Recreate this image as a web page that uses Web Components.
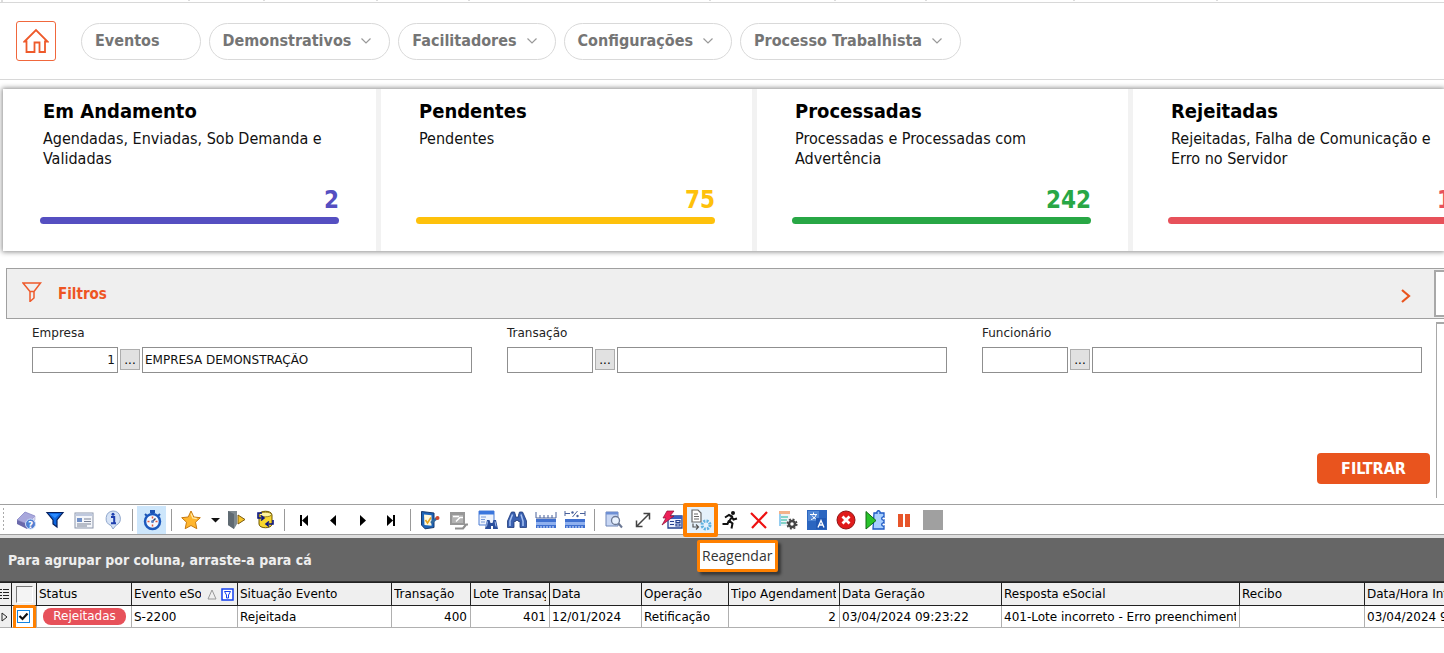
<!DOCTYPE html>
<html lang="pt-BR">
<head>
<meta charset="utf-8">
<title>Painel eSocial</title>
<style>
  html, body { margin: 0; background: #fff; }
  body { font-family: "DejaVu Sans Condensed", "DejaVu Sans", Tahoma, sans-serif; font-size: 12px; color: #000; overflow: hidden; }
</style>
</head>
<body>
<esocial-app></esocial-app>
<script>
const define = (name, html, setup) => {
  const tpl = document.createElement('template');
  tpl.innerHTML = html;
  customElements.define(name, class extends HTMLElement {
    constructor() {
      super();
      this.attachShadow({ mode: 'open' }).append(tpl.content.cloneNode(true));
    }
    connectedCallback() { if (setup) setup(this, this.shadowRoot); }
  });
};

/* ---------- toolbar glyphs, 20 x 20 ---------- */
const ICONS = {
  book: '<path d="M1 10 9 2l10 4-8 8z" fill="#a9a8dc" stroke="#7d7cc0" stroke-width=".7"/><path d="M1 10l10 4v5L1 14z" fill="#6a69ab"/><path d="M11 14l8-8v4l-8 9z" fill="#dcdcf4" stroke="#8d8cc8" stroke-width=".5"/><circle cx="14.500" cy="14" r="5" fill="#4f7fd2" stroke="#cfe0fa"/><text x="14.500" y="17.500" font-size="9" font-weight="bold" fill="#fff" text-anchor="middle" font-family="DejaVu Sans">?</text>',
  funnel: '<path d="M2 2.500h16L12 10v7l-4-3v-4z" fill="#0c66e0" stroke="#06205e" stroke-width="1.200"/><path d="M5 4h9L10 8z" fill="#2e8cff"/>',
  form: '<rect x="1" y="3" width="18" height="15" fill="#f4f6fa" stroke="#8b95aa"/><rect x="1.500" y="3.500" width="17" height="2.500" fill="#bfc9de"/><rect x="3" y="8" width="5" height="4" fill="#6f8fc8"/><path d="M10 9h7M10 11.500h7M3 14h14M3 16h10" stroke="#7b8396"/>',
  info: '<path d="M10 1a7.500 7.500 0 0 1 3 14.300L10 19l-2-3.500A7.500 7.500 0 0 1 10 1z" fill="#d6e3f6" stroke="#8ea6cc"/><path d="M8 7h3.200v6M8 13.200h5" stroke="#1e3fae" stroke-width="2" fill="none"/><circle cx="10" cy="4.200" r="1.500" fill="#1e3fae"/>',
  watch: '<path d="M8 0h5v3H8z" fill="#1c53b4"/><path d="M3 4l2 2M18 4l-2 2" stroke="#1c53b4" stroke-width="2"/><circle cx="10.500" cy="11.500" r="7.500" fill="#f2f7ff" stroke="#1b58bd" stroke-width="2.500"/><path d="M10.500 11.500l3-3" stroke="#31415f" stroke-width="1.500"/><path d="M5.500 11.500h2M13.500 11.500h2M10.500 6.500v2M10.500 14.500v2" stroke="#e4573a" stroke-width="1.500"/><circle cx="10.500" cy="11.500" r="1.500" fill="#5c83c4"/>',
  star: '<path d="M10 1l2.800 6 6.500.700-4.800 4.500 1.300 6.500L10 15.500 4.200 18.700l1.300-6.500L.700 7.700 7.200 7z" fill="#ffb62e" stroke="#c77a11"/><path d="M10 3.500l1.800 4.500 4 .700" fill="none" stroke="#ffe9a6" stroke-width="1.300"/>',
  caret: '<path d="M6 8h9l-4.500 4.500z" fill="#111"/>',
  door: '<path d="M2 1h9v13l-3 5-6-4z" fill="#7f8a90"/><path d="M2 1l6 3v15l-6-4z" fill="#5f6a72"/><path d="M12 5l7 4.500-7 4.500z" fill="#f6c52c" stroke="#7a5a10"/>',
  db: '<path d="M4 5c0-5 13-5 13 0v9c0 5-13 5-13 0z" fill="#f8d62c" stroke="#6e5700"/><ellipse cx="10.500" cy="4.500" rx="6" ry="2.300" fill="#fff3a0" stroke="#6e5700" stroke-width=".7"/><path d="M7 3H3v5h5M6 5.500L9 8l-3 2.500M12 14h6v-4M14 11.500L11 14l3 2.500" fill="none" stroke="#0a1580" stroke-width="1.600"/>',
  first: '<path d="M6 5h2v11H6zM14 5v11L8 10.500z" fill="#000"/>',
  prev: '<path d="M13 5v11L7 10.500z" fill="#000"/>',
  next: '<path d="M8 5v11l6-5.500z" fill="#000"/>',
  last: '<path d="M12 5h2v11h-2zM6 5v11l6-5.500z" fill="#000"/>',
  check: '<path d="M1.500 1.500 14 3v14.500l-9 1.300L1.500 15z" fill="#1c63b8" stroke="#17396c"/><path d="M4 4.500l7.500.700v10.500L4.500 15z" fill="#fff8dc"/><path d="M5.500 10l2 3 3.500-5.500" fill="none" stroke="#e5a41e" stroke-width="1.600"/><path d="M11 13l6-5" stroke="#31699e" stroke-width="2.500"/><circle cx="17.500" cy="8" r="2" fill="#d0482e"/>',
  grayed: '<path d="M1 2h15v13H1z" fill="#979797"/><path d="M3 5h11v8H3z" fill="#b4b4b4"/><path d="M4 6.500h6M7 11.500l4-4 3 0" stroke="#fff" stroke-width="1.400" fill="none"/><path d="M6 18.500h8l3-4h2" stroke="#8f8f8f" stroke-width="2.200" fill="none"/>',
  calfind: '<path d="M1 1h15v14H1z" fill="#eef3fc" stroke="#4e7ed4"/><path d="M1 1h15v3.500H1z" fill="#3a76dd"/><path d="M3 7h5M3 9.500h4M3 12h4" stroke="#7899d6"/><path d="M7 19l2-9h2.500l1 3h2l1-3H18l2 9h-5v-3h-2v3z" fill="#2b4f9c"/><path d="M9.500 11.500l-1 5M17 11.500l1 5" stroke="#a3bdf0"/>',
  binoc: '<path d="M.500 11l3-7 1-2h3l1 3v2h3V5l1-3h3l1 2 3 7v6.500H13v-6h-1.500v-1h-3v1H7v6H.500z" fill="#3a60b0" stroke="#1e3a7a" stroke-width=".8"/><path d="M5.500 4.500L3 11v5M14 4.500L16 11v5" fill="none" stroke="#a8c2f2" stroke-width="1.500"/>',
  ruler: '<path d="M0 2v6h20V2M4 5v3M8 5v3M12 5v3M16 5v3" fill="none" stroke="#49619a"/><path d="M0 9h20v9H0z" fill="#3f70d0"/><path d="M0 12h20v3H0z" fill="#8fb0ee"/><path d="M2 18v-2M5 18v-2M8 18v-2M11 18v-2M14 18v-2M17 18v-2" stroke="#dfe9ff"/>',
  percent: '<path d="M0 1v5M20 1v5M0 3.500h5M15 3.500h5M7.500 7l5-6" fill="none" stroke="#49619a"/><circle cx="7.500" cy="2.500" r="1.200" fill="#49619a"/><circle cx="12.500" cy="6" r="1.200" fill="#49619a"/><path d="M0 9h20v9H0z" fill="#3f70d0"/><path d="M0 12h20v3H0z" fill="#8fb0ee"/><path d="M2 18v-2M5 18v-2M8 18v-2M11 18v-2M14 18v-2M17 18v-2" stroke="#dfe9ff"/>',
  preview: '<path d="M2 2h12v14H2z" fill="#c8d7f4" stroke="#6f86b8"/><path d="M2 2h12v2.500H2z" fill="#6d8fd4"/><circle cx="11.500" cy="10.500" r="4" fill="#eaf3ff" stroke="#6b7894" stroke-width="1.300"/><path d="M14.500 13.500l3.500 4" stroke="#6b7894" stroke-width="2"/>',
  expand: '<path d="M4 16L16 4M10.500 3.500H16.500V9.500M3.500 10.500V16.500h6" fill="none" stroke="#444" stroke-width="1.500"/>',
  flash: '<path d="M6 6h14v12H6z" fill="#e9eefb" stroke="#26418f" stroke-width="1.300"/><path d="M6 6h14v3H6z" fill="#3a60c0"/><path d="M8 11.500h4M8 14.500h4M14 10.500h4v2h-4zM14 14h4v2h-4z" fill="none" stroke="#26418f" stroke-width="1.200"/><path d="M5 1h7L8 6h4L0 15l4-7H1z" fill="#ee2058" stroke="#8a1136" stroke-width=".7"/>',
  reschedule: '<path d="M1 0h6l3 3v9H1z" fill="#fff" stroke="#666" stroke-width="1.200"/><path d="M3 4h4M3 6.500h5M3 9h5" stroke="#666"/><path d="M2 13.500v3.500h5M5 14.500L7.500 17 5 19.500" fill="none" stroke="#555" stroke-width="1.200"/><circle cx="15" cy="15" r="4" fill="none" stroke="#5fb2e0" stroke-width="3" stroke-dasharray="2 1.140"/>',
  run: '<circle cx="13" cy="3" r="2" fill="#111"/><path d="M5 7.500l4-2.500 3 1.500-2.500 4.500 3 2.500-1 5M9 10.500L7.500 14H2.500M11.500 6.500l2 3 3.500-1" fill="none" stroke="#111" stroke-width="2"/>',
  cross: '<path d="M2 3l15 15M18 2L3 18" stroke="#ee1111" stroke-width="2.200" fill="none"/>',
  listgear: '<path d="M1 1h11v15H1z" fill="#eef3f7"/><path d="M1 1h11v3H1z" fill="#f2b28a"/><path d="M3 7h7M3 10h6M3 13h5" stroke="#62c9b8" stroke-width="1.500"/><path d="M1 4h2v12H1z" fill="#95cdf0"/><circle cx="14" cy="14" r="3" fill="none" stroke="#444" stroke-width="2.500"/><circle cx="14" cy="14" r="4.800" fill="none" stroke="#444" stroke-width="1.500" stroke-dasharray="2 1.770"/>',
  lang: '<path d="M0 0h20v20H0z" fill="#2b66c0"/><path d="M1 1h11v10H1z" fill="#4f86d4"/><path d="M3 4.500h7M6.500 2.500v2M9 5c-1 3-3 4-5 4.500M5 5.500c1 2 3 3 4 3.500" stroke="#fff" fill="none"/><path d="M9 8h10v11H9z" fill="#2159b4"/><path d="M11 17.500L14 10.500l3 7M12 15h4" stroke="#fff" fill="none" stroke-width="1.300"/>',
  stop: '<circle cx="10" cy="10" r="9" fill="#e01b1b" stroke="#8f1414"/><path d="M6.500 6.500l7 7M13.500 6.500l-7 7" stroke="#fff" stroke-width="2.800"/>',
  plugin: '<path d="M9 3h3c-1-3 4-3 3 0h4v4c-3-1-3 4 0 3v3c-3-1-3 4 0 3v3H8z" fill="#a8d0ff" stroke="#1d58c4" stroke-width="1.300"/><path d="M1 1.500l10 9-10 8.500z" fill="#28c32b" stroke="#0f6d12"/>',
  pause: '<path d="M4 4h5v13H4zM11 4h5v13h-5z" fill="#e7552a"/>',
  block: '<path d="M0 0h20v20H0z" fill="#a0a0a0"/>',
};

define('tool-button', `
<style>
  :host { display: block; flex: none; width: 29px; position: relative; }
  :host([narrow]) { width: 16px; }
  button { display: grid; place-items: center; width: 100%; height: 28px; padding: 0; border: 0; background: none; }
  :host([active]) button { background: #cde6fb; }
  :host([marked]) button { background: #e5f1fb; }
  svg { display: block; width: 20px; height: 20px; overflow: visible; }
  .ring { display: none; }
  :host([marked]) .ring { display: block; position: absolute; inset: -3px; border: 4px solid #ff8000; border-radius: 2px; }
</style>
<button type="button"></button><span class="ring"></span><slot></slot>`, (el, root) => {
  const b = root.querySelector('button');
  b.setAttribute('aria-label', el.getAttribute('label'));
  b.innerHTML = `<svg viewBox="0 0 20 20" aria-hidden="true">${ICONS[el.getAttribute('icon')]}</svg>`;
});

define('tool-separator', `
<style>:host { display: block; flex: none; width: 1px; height: 22px; margin: 0 4px 0 5px; background: #999; }</style>`);

define('tool-tip', `
<style>
  :host { display: block; position: absolute; top: 34px; left: 11px; z-index: 3; padding: 2px; box-sizing: border-box; width: 81px; height: 32px;
    border: 3px solid #ff8000; border-radius: 2px; background: #fff; color: #333;
    font: 14px/22px "Open Sans", "Noto Sans", sans-serif; white-space: nowrap; box-shadow: 3px 3px 3px rgba(0,0,0,.45); }
</style><slot></slot>`);

define('tool-bar', `
<style>
  :host { display: block; position: relative; z-index: 2; border-top: 1px solid #a0a0a0; border-bottom: 3px solid #dedede; }
  .row { display: flex; align-items: center; height: 29px; padding-left: 2px; border-bottom: 1px solid #a0a0a0; }
  .grip { width: 3px; height: 25px; margin-right: 6px; background: radial-gradient(circle, #aaa 1px, transparent 1px) 0 0 / 3px 4px; }
</style>
<div class="row" role="toolbar" aria-label="Ferramentas">
  <span class="grip"></span>
  <tool-button icon="book" label="Ajuda"></tool-button><tool-button icon="funnel" label="Filtro"></tool-button><tool-button icon="form" label="Formulário"></tool-button><tool-button icon="info" label="Informações"></tool-button>
  <tool-separator></tool-separator>
  <tool-button icon="watch" label="Tempo" active></tool-button>
  <tool-separator></tool-separator>
  <tool-button icon="star" label="Favoritos"></tool-button><tool-button icon="caret" label="Mais favoritos" narrow></tool-button><tool-button icon="door" label="Sair"></tool-button><tool-button icon="db" label="Atualizar dados"></tool-button>
  <tool-separator></tool-separator>
  <tool-button icon="first" label="Primeiro"></tool-button><tool-button icon="prev" label="Anterior"></tool-button><tool-button icon="next" label="Próximo"></tool-button><tool-button icon="last" label="Último"></tool-button>
  <tool-separator></tool-separator>
  <tool-button icon="check" label="Marcar"></tool-button><tool-button icon="grayed" label="Propriedades"></tool-button><tool-button icon="calfind" label="Localizar registro"></tool-button><tool-button icon="binoc" label="Localizar"></tool-button><tool-button icon="ruler" label="Ajustar colunas"></tool-button><tool-button icon="percent" label="Ajustar em percentual"></tool-button>
  <tool-separator></tool-separator>
  <tool-button icon="preview" label="Visualizar"></tool-button><tool-button icon="expand" label="Expandir"></tool-button><tool-button icon="flash" label="Ações"></tool-button><tool-button icon="reschedule" label="Reagendar" marked><tool-tip>Reagendar</tool-tip></tool-button><tool-button icon="run" label="Executar"></tool-button><tool-button icon="cross" label="Excluir"></tool-button><tool-button icon="listgear" label="Configurar lista"></tool-button><tool-button icon="lang" label="Traduzir"></tool-button><tool-button icon="stop" label="Cancelar"></tool-button><tool-button icon="plugin" label="Processar"></tool-button><tool-button icon="pause" label="Pausar"></tool-button><tool-button icon="block" label="Parar"></tool-button>
</div>`);

define('nav-pill', `
<style>
  :host { display: block; flex: none; }
  button { display: flex; align-items: center; gap: 10px; height: 37px; padding: 0 18px 0 13px; border: 1px solid #d9d9d9; border-radius: 19px; background: #fff; color: #757575; font-family: inherit; font-weight: bold; font-size: 16px; line-height: 20px; }
  :host([plain]) button { padding-right: 40px; }
  :host([plain]) svg { display: none; }
  svg { width: 10px; height: 6px; }
</style>
<button type="button"><span><slot></slot></span><svg viewBox="0 0 10 6" aria-hidden="true"><path d="M.500 .500L5 5 9.500 .500" fill="none" stroke="#999" stroke-width="1.200"/></svg></button>`);

define('main-nav', `
<style>
  :host { display: block; border-bottom: 1px solid #d8d8d8; }
  .strip { display: block; width: 100%; height: 3px; }
  nav { display: flex; align-items: center; gap: 8px; height: 76px; padding-left: 16px; }
  .home { display: grid; place-items: center; width: 40px; height: 40px; box-sizing: border-box; border: 1px solid #f0673c; border-radius: 3px; margin-right: 17px; }
</style>
<svg class="strip" aria-hidden="true"><path d="M2 0v2M189 0v1M264 0v1M377 0v1M469 0v1M710 0v1M835 0v1M926 0v1M1074 0v1M1217 0v1" stroke="#bbb"/><rect y="2" width="100%" height="1" fill="#d8d8d8"/></svg>
<nav>
  <a class="home" href="#" aria-label="Início"><svg width="26" height="26" viewBox="0 0 26 26" aria-hidden="true"><path d="M1.500 13.500L13 2l11.500 11.500H22V24h-5.500V14.500h-5V24H3.500V13.500z" fill="none" stroke="#ee5a2b" stroke-width="1.800"/></svg></a>
  <nav-pill plain>Eventos</nav-pill><nav-pill>Demonstrativos</nav-pill><nav-pill>Facilitadores</nav-pill><nav-pill>Configurações</nav-pill><nav-pill>Processo Trabalhista</nav-pill>
</nav>`);

define('status-card', `
<style>
  :host { display: flex; flex-direction: column; box-sizing: border-box; flex: none; width: 376px; height: 162px; padding: 10px 36px 27px 35px; border-right: 5px solid #f2f2f2; }
  h2 { margin: 0 0 6px 3px; font-size: 20px; line-height: 24px; }
  p { margin: 0 0 0 3px; width: 285px; font-size: 16px; line-height: 20px; color: #111; }
  .total { margin-top: auto; width: 299px; text-align: right; font-size: 24px; line-height: 26px; font-weight: bold; color: var(--tone); }
  .bar { width: 299px; height: 7px; margin-top: 4px; border-radius: 4px; background: var(--tone); }
</style>
<h2><slot name="title"></slot></h2><p><slot></slot></p><div class="total"><slot name="total"></slot></div><div class="bar"></div>`);

define('status-cards', `
<style>
  :host { display: block; padding: 9px 0 17px 3px; }
  .row { display: flex; padding-left: 2px; box-shadow: 0 0 5px 1px rgba(0,0,0,.45); background: #fff; }
</style>
<div class="row">
  <status-card style="--tone:#554fc1"><span slot="title">Em Andamento</span>Agendadas, Enviadas, Sob Demanda e Validadas<span slot="total">2</span></status-card>
  <status-card style="--tone:#fec10b"><span slot="title">Pendentes</span>Pendentes<span slot="total">75</span></status-card>
  <status-card style="--tone:#28a745"><span slot="title">Processadas</span>Processadas e Processadas com Advertência<span slot="total">242</span></status-card>
  <status-card style="--tone:#e7515a"><span slot="title">Rejeitadas</span>Rejeitadas, Falha de Comunicação e Erro no Servidor<span slot="total">17</span></status-card>
</div>`);

define('lookup-field', `
<style>
  :host { display: block; min-width: 0; font-family: "DejaVu Sans", sans-serif; }
  label { display: block; font-size: 12px; line-height: 16px; margin-bottom: 6px; color: #222; }
  .row { display: flex; align-items: center; gap: 2px; }
  input { box-sizing: border-box; height: 26px; min-width: 0; padding: 0 2px; border: 1px solid #8f8f8f; background: #fff; color: #111; font-family: inherit; font-size: 12px; }
  .code { flex: none; width: 86px; text-align: right; }
  .name { flex: 1; }
  button { flex: none; width: 20px; height: 21px; padding: 0; border: 1px solid #adadad; background: #e1e1e1; font-family: inherit; font-size: 12px; line-height: 16px; }
</style>
<label for="code"></label>
<div class="row"><input class="code" id="code"><button type="button">...</button><input class="name" id="name"></div>`, (el, root) => {
  root.querySelector('label').textContent = el.getAttribute('label');
  root.querySelector('.code').value = el.getAttribute('code') || '';
  const name = root.querySelector('.name');
  name.value = el.getAttribute('name') || '';
  name.setAttribute('aria-label', 'Nome: ' + el.getAttribute('label'));
});

define('filter-panel', `
<style>
  :host { display: grid; grid-template-columns: 1fr 9px; height: 236px; margin-left: 6px; }
  header { grid-column: 1 / -1; display: flex; align-items: center; height: 49px; border: 1px solid #a0a0a0; border-right: 0; background: #efefef; color: #ee5523; }
  header svg { flex: none; }
  h2 { flex: 1; margin: 0 0 0 16px; font-size: 15px; line-height: 20px; }
  .funnel { margin: 0 0 4px 15px; }
  .toggle { display: grid; place-items: center; width: 20px; height: 20px; padding: 0; border: 0; background: none; margin: 4px 18px 0 0; }
  .box { flex: none; width: 8px; height: 43px; border: 2px solid #a8a8a8; border-right: 0; background: #fff; }
  .body { display: flex; flex-direction: column; padding: 5px 13px 0 26px; }
  .fields { display: grid; grid-template-columns: repeat(3, 1fr); gap: 35px; }
  .go { align-self: flex-end; width: 113px; height: 31px; margin: 80px -8px 0 0; border: 0; border-radius: 4px; background: #e9541e; color: #fff; font-family: inherit; font-size: 16px; font-weight: bold; }
  .side { margin: 2px 0 6px 1px; border: 2px solid #a8a8a8; border-width: 2px 0 0 1px; height: 174px; }
</style>
<header>
  <svg class="funnel" width="20" height="20" viewBox="0 0 20 20" aria-hidden="true"><path d="M1 1h17.500L12 9.500v6.500L8 19.500V9.500z M8 9.500h4" fill="none" stroke="#ee5a2b" stroke-width="1.500"/></svg>
  <h2>Filtros</h2>
  <button class="toggle" type="button" aria-label="Recolher filtros"><svg width="10" height="16" viewBox="0 0 10 16"><path d="M1 2l7 6-7 6" fill="none" stroke="#e9541e" stroke-width="2.200"/></svg></button>
  <span class="box"></span>
</header>
<div class="body">
  <div class="fields">
    <lookup-field label="Empresa" code="1" name="EMPRESA DEMONSTRAÇÃO"></lookup-field>
    <lookup-field label="Transação"></lookup-field>
    <lookup-field label="Funcionário"></lookup-field>
  </div>
  <button class="go" type="button">FILTRAR</button>
</div>
<div class="side"></div>`);

define('event-grid', `
<style>
  :host { display: block; }
  .group { height: 43px; padding-left: 8px; background: #666; color: #eee; font-weight: bold; font-size: 14px; line-height: 44px; border-bottom: 1px solid #333; }
  .scroll { overflow: hidden; }
  table { table-layout: fixed; border-collapse: separate; border-spacing: 0; width: 1525px; font-family: "DejaVu Sans", sans-serif; font-size: 12px; line-height: 16px; }
  th, td { box-sizing: border-box; padding: 0 3px 0 2px; overflow: clip; overflow-clip-margin: content-box; white-space: nowrap; text-align: left; font-weight: normal; }
  th { height: 24px; background: #efefef; border-top: 1px solid #222; border-right: 1px solid #222; border-bottom: 1px solid #222; }
  td { height: 22px; border-right: 1px solid #b0b0b0; border-bottom: 1px solid #b0b0b0; }
  .num { text-align: right; }
  .mark { padding: 0; background: #efefef; border-right-color: #222; }
  .mark svg { display: block; }
  .pick { padding: 0; position: relative; overflow: visible; }
  input { display: block; appearance: none; box-sizing: border-box; margin: 0; }
  .all { width: 17px; height: 17px; margin-left: 4px; background: #f4f4f4; border: 1px solid #fff; border-top-color: #777; border-left-color: #777; }
  .one { width: 13px; height: 13px; margin-left: 5px; border: 1px solid #1583e0; background: #fff; }
  .pick svg { position: absolute; left: 6px; top: 5px; }
  .ring { position: absolute; left: 1px; top: -1px; width: 17px; height: 19px; border: 3px solid #ff8000; border-radius: 2px; }
  .badge { display: block; width: 83px; margin-left: 4px; height: 17px; border-radius: 8px; background: #e7515a; color: #fff; text-align: center; line-height: 17px; }
  .sort { display: flex; align-items: center; }
  .sort span { flex: none; width: 67px; overflow: hidden; }
  .sort svg { flex: none; margin-left: 6px; }
  .sort svg + svg { margin-left: 4px; }
</style>
<div class="group">Para agrupar por coluna, arraste-a para cá</div>
<div class="scroll"><table>
  <colgroup><col style="width:12px"><col style="width:25px"><col style="width:95px"><col style="width:106px"><col style="width:154px"><col style="width:79px"><col style="width:79px"><col style="width:92px"><col style="width:87px"><col style="width:111px"><col style="width:162px"><col style="width:238px"><col style="width:125px"><col style="width:160px"></colgroup>
  <thead><tr>
    <th class="mark"><svg width="11" height="14" viewBox="0 0 11 14" aria-hidden="true"><path d="M0 2.500h2M3 2.500h6M0 5.500h2M3 5.500h6M0 8.500h2M3 8.500h6M0 11.500h2M3 11.500h6" stroke="#222" stroke-width="1"/></svg></th>
    <th class="pick"><input class="all" type="checkbox" aria-label="Selecionar todos"></th>
    <th>Status</th>
    <th><div class="sort"><span>Evento eSocial</span><svg width="10" height="11" viewBox="0 0 10 11" aria-hidden="true"><path d="M1 10L5 1l4 9z" fill="none" stroke="#999"/></svg><svg width="13" height="13" viewBox="0 0 13 13" aria-hidden="true"><path d="M1 1h11v11H1z" fill="#fff" stroke="#1540f0" stroke-width="1.500"/><path d="M3.500 3.500h6L7.500 7v3h-2V7z" fill="none" stroke="#1540f0"/></svg></div></th>
    <th>Situação Evento</th><th>Transação</th><th>Lote Transação</th><th>Data</th><th>Operação</th><th>Tipo Agendamento</th><th>Data Geração</th><th>Resposta eSocial</th><th>Recibo</th><th>Data/Hora Integração</th>
  </tr></thead>
  <tbody><tr>
    <td class="mark"><svg width="10" height="12" viewBox="0 0 10 12" aria-hidden="true"><path d="M2 2l5 4-5 4z" fill="none" stroke="#222"/></svg></td>
    <td class="pick"><input class="one" type="checkbox" checked aria-label="Selecionar registro"><svg width="11" height="11" viewBox="0 0 11 11" aria-hidden="true"><path d="M1.500 5l3 3 5-5.500" fill="none" stroke="#111" stroke-width="2.200"/></svg><span class="ring"></span></td>
    <td><span class="badge">Rejeitadas</span></td><td>S-2200</td><td>Rejeitada</td><td class="num">400</td><td class="num">401</td><td>12/01/2024</td><td>Retificação</td><td class="num">2</td><td>03/04/2024 09:23:22</td><td>401-Lote incorreto - Erro preenchimento</td><td></td><td>03/04/2024 9:25:10</td>
  </tr></tbody>
</table></div>`);

define('esocial-app', `
<style>:host { display: block; overflow: hidden; }</style>
<main-nav></main-nav>
<status-cards></status-cards>
<filter-panel></filter-panel>
<tool-bar></tool-bar>
<event-grid></event-grid>`);
</script>
</body>
</html>
